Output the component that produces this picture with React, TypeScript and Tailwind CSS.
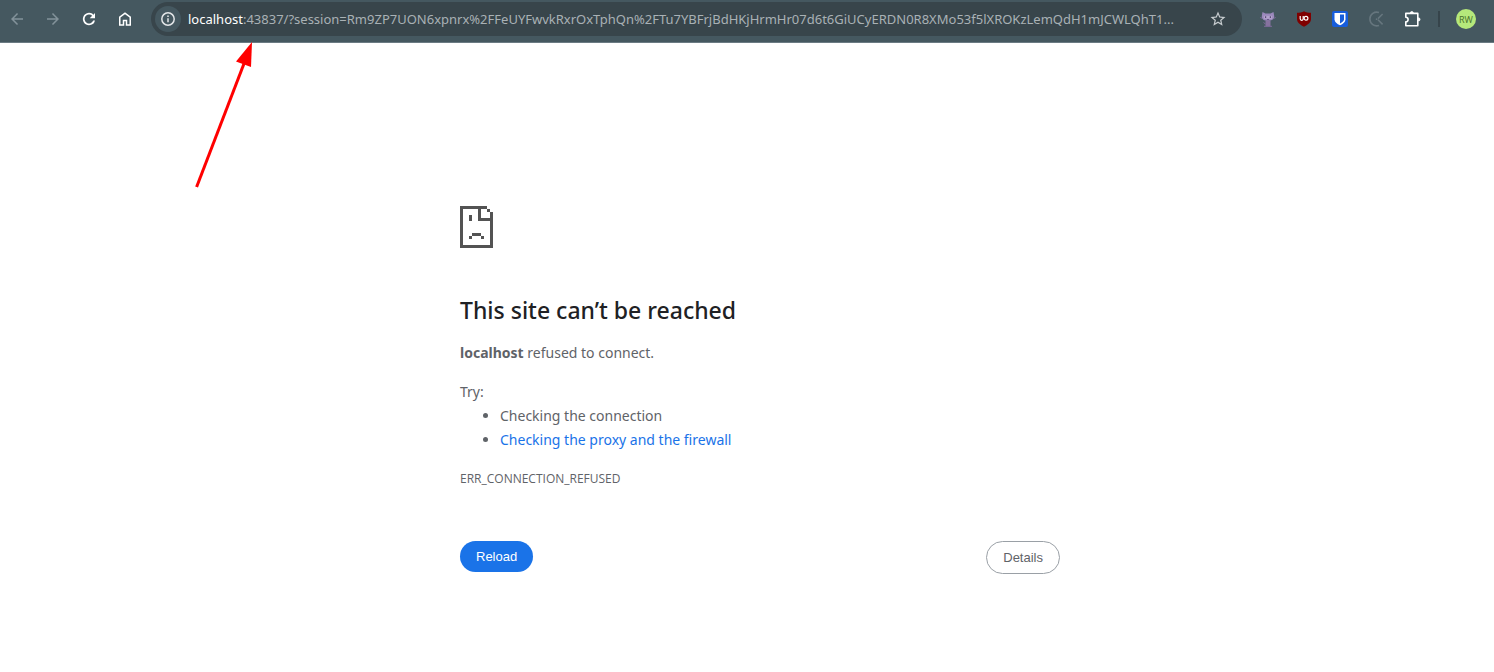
import React from 'react';

const HOST = 'localhost';
const URL_REST =
    ':43837/?session=Rm9ZP7UON6xpnrx%2FFeUYFwvkRxrOxTphQn%2FTu7YBFrjBdHKjHrmHr07d6t6GiUCyERDN0R8XMo53f5lXROKzLemQdH1mJCWLQhT1...';

type BarButtonProps = {
    label: string;
    className?: string;
    children: React.ReactNode;
};

const BarButton: React.FC<BarButtonProps> = ({ label, className = 'text-white', children }) => (
    <button type="button" aria-label={label} className={`flex size-[34px] shrink-0 items-center justify-center rounded-full ${className}`}>
        {children}
    </button>
);

// 24x24 material style glyph
const Glyph: React.FC<{ d: string; className?: string }> = ({ d, className = 'size-[18px]' }) => (
    <svg viewBox="0 0 24 24" fill="currentColor" className={className}>
        <path d={d} />
    </svg>
);

const Toolbar: React.FC = () => (
    <header className="flex h-[43px] border-b border-[#6b7b83] bg-[#455860] pt-0.5 pr-[18px]">
        <nav className="flex gap-0.5">
            <BarButton label="Back" className="text-[#83929a]">
                <Glyph d="M20 11H7.83l5.59-5.59L12 4l-8 8 8 8 1.41-1.41L7.83 13H20v-2z" />
            </BarButton>
            <BarButton label="Forward" className="text-[#83929a]">
                <Glyph d="M12 4l-1.41 1.41L16.17 11H4v2h12.17l-5.58 5.59L12 20l8-8-8-8z" />
            </BarButton>
            <BarButton label="Reload">
                <Glyph d="M12 20.2a8.2 8.2 0 1 1 5.8-14L20 4v7h-7l3.2-3.2A5.9 5.9 0 1 0 17.6 14H20a8.2 8.2 0 0 1-8 6.2z" />
            </BarButton>
            <BarButton label="Home">
                <Glyph d="M6 19h3v-6h6v6h3v-9l-6-4.5L6 10v9zm-2 2V9l8-6 8 6v12h-7v-6h-2v6H4z" />
            </BarButton>
        </nav>

        <form className="ml-[9px] flex h-[34px] min-w-0 flex-1 items-center rounded-full bg-[#38454b] pr-[7px] pl-1">
            <button type="button" aria-label="View site information" className="flex size-[26px] shrink-0 items-center justify-center rounded-full bg-[#455860] text-[#e3e6e8]">
                <svg viewBox="0 0 16 16" fill="none" stroke="currentColor" strokeWidth="1.5" className="size-4">
                    <circle cx="8" cy="8" r="6.2" />
                    <path d="M8 7.2v4M8 4.4v1.5" />
                </svg>
            </button>
            <label htmlFor="url" className="ml-[7px] font-['Noto_Sans',sans-serif] text-[13px] leading-5 text-white">
                {HOST}
            </label>
            <input
                id="url"
                type="text"
                defaultValue={URL_REST}
                spellCheck={false}
                className="min-w-0 flex-1 bg-transparent font-['Noto_Sans',sans-serif] text-[13px] leading-5 text-[#a9b1b5] outline-none"
            />
            <BarButton label="Bookmark this tab" className="text-[#c8cdd0]">
                <Glyph d="M22 9.24l-7.19-.62L12 2 9.19 8.63 2 9.24l5.46 4.73L5.82 21 12 17.27 18.18 21l-1.63-7.03L22 9.24zM12 15.4l-3.76 2.27 1-4.28-3.32-2.88 4.38-.38L12 6.1l1.71 4.04 4.38.38-3.32 2.88 1 4.28L12 15.4z" />
            </BarButton>
        </form>

        <div className="ml-[9px] flex gap-0.5">
            <BarButton label="Octocat extension">
                <svg viewBox="0 0 16 16" className="size-4">
                    <path d="M2.500 1l3 1.500h5l3-1.500.7 4c.3 3-2 4.800-6.200 4.800S1.500 8 1.800 5z" fill="#9b88bc" />
                    <path d="M5.500 9.500h5v6h-5z" fill="#86729f" />
                    <path d="M.3 6.500l1.800.8M15.700 6.500l-1.800.8M3.500 11.500l2 1.500M4 15.300h8" fill="none" stroke="#7d6a9b" />
                    <path d="M3.800 4.800h8.400v3H3.800z" fill="#b3a3cd" />
                    <path d="M5 5.300h1.200v1.700H5zM9.800 5.300H11v1.700H9.800zM7 8h2v.7H7z" fill="#5c4b78" />
                </svg>
            </BarButton>
            <BarButton label="uBlock Origin">
                <svg viewBox="0 0 16 16" className="size-4">
                    <path d="M8 .3c1.600 1.100 4.600 1.500 7 1.500v6c0 4-3.200 6-7 7.900C4.200 13.800 1 11.800 1 7.800v-6C3.400 1.800 6.400 1.400 8 .3z" fill="#800000" />
                    <path d="M4.200 5v2.800a1.500 1.500 0 0 0 3 0V5" fill="none" stroke="#fff" strokeWidth="1.200" />
                    <circle cx="10" cy="7.200" r="1.900" fill="none" stroke="#fff" strokeWidth="1.200" />
                </svg>
            </BarButton>
            <BarButton label="Bitwarden">
                <svg viewBox="0 0 16 16" className="size-4">
                    <rect width="16" height="16" rx="2" fill="#175ddc" />
                    <path d="M2.500 2h11v6.200c0 2.800-2.500 4.700-5.500 6-3-1.300-5.500-3.200-5.500-6z" fill="#fff" />
                    <path d="M8 3.500h4v4.800c0 1.700-1.600 3.100-4 4.200z" fill="#175ddc" />
                </svg>
            </BarButton>
            <BarButton label="Clockify" className="text-[#66767e]">
                <svg viewBox="0 0 16 16" fill="none" stroke="currentColor" strokeWidth="1.600" className="size-4">
                    <path d="M11 1.600a6.800 6.800 0 1 0 0 12.800M10 7.600l4.600-4.600M10 8.800l4.600 4.600" />
                    <circle cx="8.600" cy="8.200" r=".9" fill="currentColor" stroke="none" />
                </svg>
            </BarButton>
            <BarButton label="Extensions">
                <svg viewBox="0 0 18 18" fill="none" stroke="currentColor" strokeWidth="1.600" strokeLinejoin="round" className="size-[18px]">
                    <path d="M2.800 3.400h12v12.400h-12v-4a2.300 2.300 0 0 0 0-4.600z" />
                    <path d="M7.300 3a1.500 1.500 0 0 1 3 0zM15.400 7.800a1.500 1.500 0 0 1 0 3.200z" fill="currentColor" strokeWidth=".8" />
                </svg>
            </BarButton>
        </div>

        <div className="mt-[9px] ml-[9px] h-4 w-0.5 bg-[#36444b]" />
        <button type="button" aria-label="Profile" className="mt-[7px] ml-4 flex size-5 items-center justify-center rounded-full bg-[#b5e87b] font-['Open_Sans',sans-serif] text-[9px] leading-none text-[#47702a]">
            RW
        </button>
    </header>
);

const SadPage: React.FC = () => (
    <svg viewBox="0 0 11 14" fill="#535353" shapeRendering="crispEdges" className="h-[42px] w-[33px]">
        <path d="M0 0h9v1H7v3h3V2h1v12H0zM1 1v12h9V5H6V1z" fillRule="evenodd" />
        <path d="M9 1h1v1H9zM3 3h1v2H3zM4 9h3v1H4zM3 10h1v1H3zM7 10h1v1H7z" />
    </svg>
);

const App: React.FC = () => (
    <div className="relative min-h-screen bg-white">
        <Toolbar />

        {/* Arrow pointing at the port in the address bar */}
        <svg viewBox="0 0 60 148" className="pointer-events-none absolute top-[42px] left-[194px] h-[148px] w-[60px]">
            <path d="M2.600 145L51 19" stroke="#f00" strokeWidth="3" />
            <path d="M58 0L42 19.500l15 5.500z" fill="#f00" />
        </svg>

        <main className="mx-auto box-content max-w-[600px] pt-[163px] pl-[26px] font-['Noto_Sans',sans-serif] text-[14px] leading-6 text-[#5f6368]">
            <SadPage />
            <h1 className="mt-12 text-[23px] leading-7 font-medium text-[#202124]">This site can’t be reached</h1>
            <p className="mt-[17px]">
                <strong className="font-bold">localhost</strong> refused to connect.
            </p>
            <p className="mt-[15px]">Try:</p>
            <ul className="list-disc pl-10">
                <li>Checking the connection</li>
                <li>
                    <a href="#buttons" className="text-[#1a73e8]">Checking the proxy and the firewall</a>
                </li>
            </ul>
            <p className="mt-[15px] font-['Open_Sans',sans-serif] text-[12px]">ERR_CONNECTION_REFUSED</p>
            <div id="buttons" className="mt-[50px] flex items-start justify-between font-['Liberation_Sans',Arial,sans-serif] text-[13px] leading-[15px]">
                <button type="button" className="rounded-full bg-[#1a73e8] px-4 py-2 text-white">Reload</button>
                <button type="button" className="rounded-full border border-[#9aa0a6] px-4 py-2">Details</button>
            </div>
        </main>
    </div>
);

export default App;
